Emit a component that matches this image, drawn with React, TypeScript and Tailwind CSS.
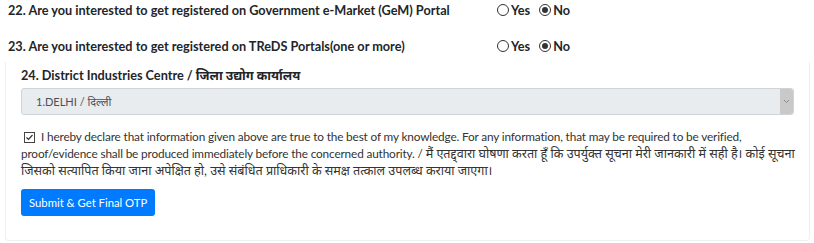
import React from "react";

function Radio({ checked, label }: { checked?: boolean; label: string }) {
  return (
    <label className="flex items-center gap-[2px]">
      <span className="flex h-[12px] w-[12px] items-center justify-center rounded-full border border-[#333] bg-white">
        {checked && <span className="h-[6px] w-[6px] rounded-full bg-[#333]" />}
      </span>
      <span className="font-bold">{label}</span>
    </label>
  );
}

function Question({ text }: { text: string }) {
  return (
    <div className="flex items-center h-[20px]">
      <div className="w-[489px] font-bold whitespace-nowrap">{text}</div>
      <div className="flex items-center gap-[9px]">
        <Radio label="Yes" />
        <Radio label="No" checked />
      </div>
    </div>
  );
}

function Hi({ children }: { children: React.ReactNode }) {
  return <span className="text-[12.6px] tracking-normal">{children}</span>;
}

export default function App() {
  return (
    <div
      className="w-[814px] h-[243px] bg-white text-[#212529] text-[12.7px] leading-[17px] overflow-hidden"
      style={{ fontFamily: 'Lato, "Noto Sans", sans-serif' }}
    >
      <div className="pl-[8px] flex flex-col gap-[16px]">
        <Question text="22. Are you interested to get registered on Government e-Market (GeM) Portal" />
        <Question text="23. Are you interested to get registered on TReDS Portals(one or more)" />
      </div>
      <div className="ml-[5px] mr-[4px] mt-[6px] border border-t-0 border-[#eef0f2] rounded-b-[4px] px-[15px] pt-[5px] pb-[24px]">
        <div className="font-bold mb-[4px]">24. District Industries Centre / जिला उद्योग कार्यालय</div>
        <div className="flex h-[27px] rounded-[3px] border border-[#ced4da] bg-[#e9ecef]">
          <div className="flex-1 flex items-center pl-[14px] text-[11px] text-[#495057]">1.DELHI / दिल्ली</div>
          <div className="w-[13px] flex items-center justify-center bg-[#c9c9c9] rounded-r-[3px]">
            <svg width="7" height="5" viewBox="0 0 7 5" fill="none">
              <path d="M1 1l2.5 2.5L6 1" stroke="#888" strokeWidth="1" />
            </svg>
          </div>
        </div>
        <p className="mt-[13px] text-[#333] whitespace-nowrap text-[11.8px] tracking-[-0.15px]">
          <span className="inline-flex align-[-1px] mr-[6px] ml-[3px] h-[11px] w-[11px] items-center justify-center border border-[#444]">
            <svg width="9" height="9" viewBox="0 0 9 9" fill="none">
              <path d="M1.5 4.5l2 2L7.5 2" stroke="#333" strokeWidth="1.2" />
            </svg>
          </span>
          I hereby declare that information given above are true to the best of my knowledge. For any information, that may be required to be verified,
          <br />
          proof/evidence shall be produced immediately before the concerned authority. /{" "}
          <Hi>मैं एतद्द्वारा घोषणा करता हूँ कि उपर्युक्त सूचना मेरी जानकारी में सही है। कोई सूचना</Hi>
          <br />
          <Hi>जिसको सत्यापित किया जाना अपेक्षित हो, उसे संबंधित प्राधिकारी के समक्ष तत्काल उपलब्ध कराया जाएगा।</Hi>
        </p>
        <button className="mt-[10px] h-[27px] px-[8px] rounded-[3px] bg-[#007bff] text-white text-[11.3px]">
          Submit &amp; Get Final OTP
        </button>
      </div>
    </div>
  );
}
